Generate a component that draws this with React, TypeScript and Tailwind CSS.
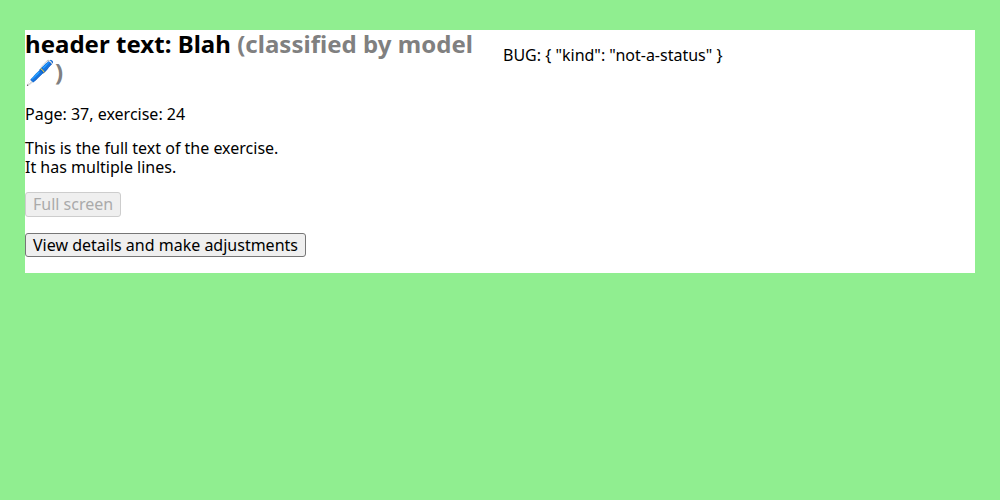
export default function App() {
  return (
    <div className="min-h-screen bg-[#90ee90] px-[25px] pt-[30px] font-['Noto_Sans',sans-serif] text-[16px] leading-[19px] text-black">
      <div className="grid h-[243px] grid-cols-2 gap-[6px] bg-white">
        <div className="flex flex-col items-start">
          <h2 className="text-[24px] leading-[28px] font-bold tracking-[0.03px]">
            header text: Blah <span className="text-[#808080]">(classified by model <span className="brightness-115">🖊️</span>)</span>
          </h2>
          <p className="mt-[19px]">Page: 37, exercise: 24</p>
          <p className="mt-[15px]">
            This is the full text of the exercise.
            <br />
            It has multiple lines.
          </p>
          <button disabled className="mt-[15px] h-[25px] rounded-[3px] border border-[#cdcdcd] bg-[#efefef] px-[7px] text-[#aaaaaa]">
            Full screen
          </button>
          <button className="mt-[16px] h-[24px] rounded-[3px] border border-[#767676] bg-[#efefef] px-[7px]">
            View details and make adjustments
          </button>
        </div>
        <p className="mt-[16px]">BUG: {'{ "kind": "not-a-status" }'}</p>
      </div>
    </div>
  );
}
